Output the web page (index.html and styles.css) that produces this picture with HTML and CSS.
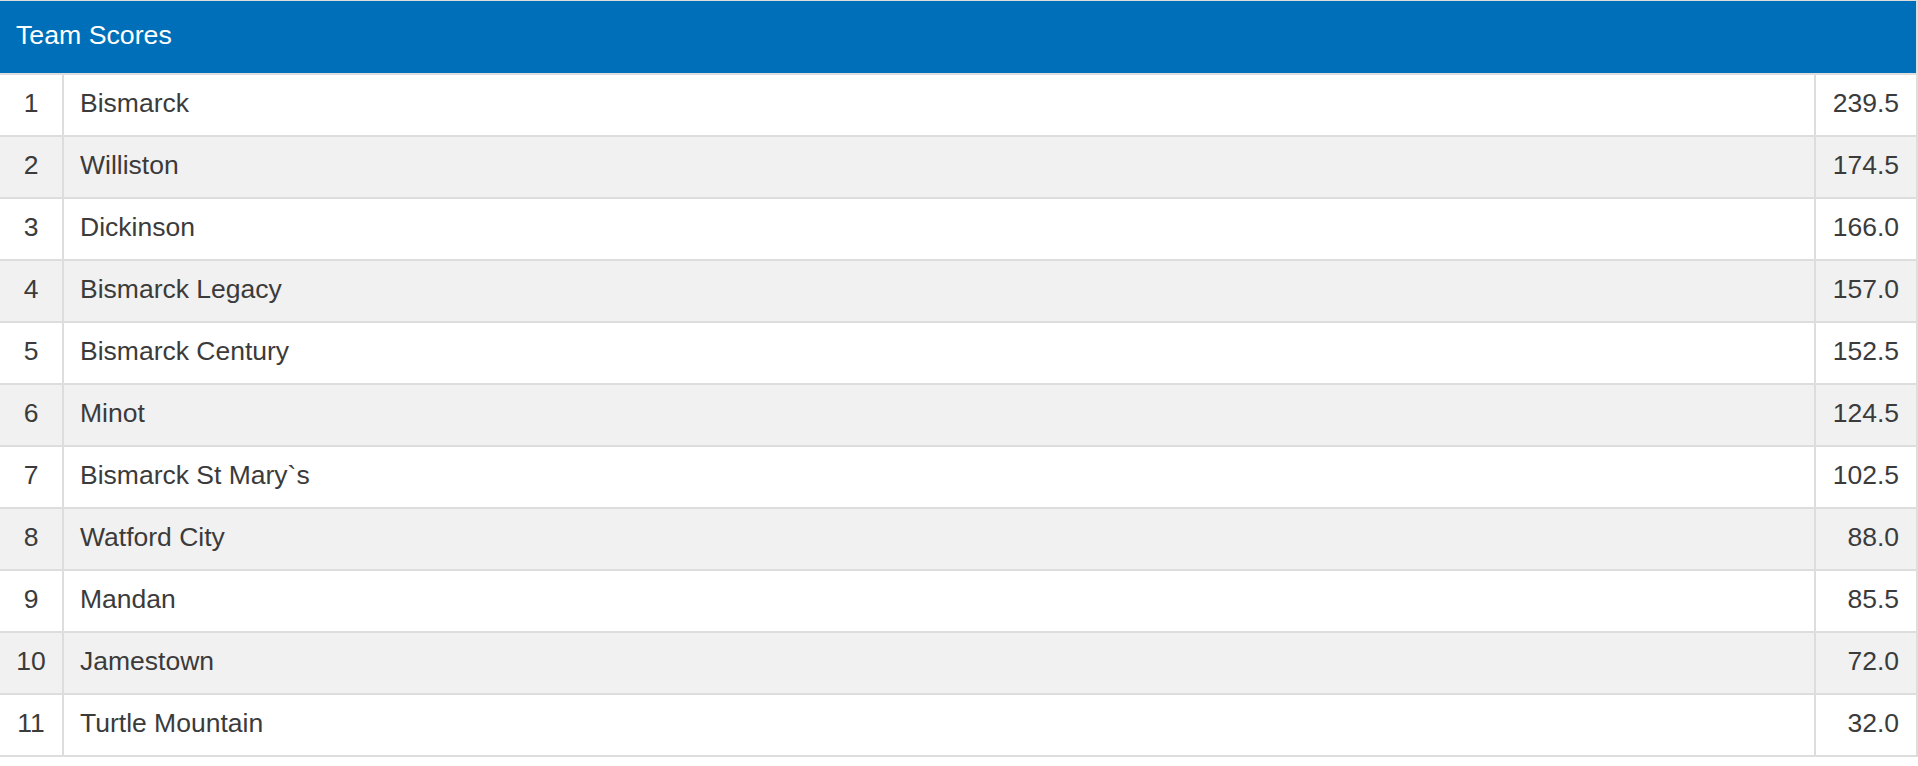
FILE: index.html
```html
<!DOCTYPE html>
<html>
<head>
<meta charset="utf-8">
<link rel="stylesheet" href="styles.css">
</head>
<body>
<div class="panel">
  <div class="panel-heading">Team Scores</div>
  <table class="scores">
    <colgroup><col class="c-rank"><col class="c-name"><col class="c-score"></colgroup>
    <tbody>
      <tr><td class="rank">1</td><td class="name">Bismarck</td><td class="score">239.5</td></tr>
      <tr><td class="rank">2</td><td class="name">Williston</td><td class="score">174.5</td></tr>
      <tr><td class="rank">3</td><td class="name">Dickinson</td><td class="score">166.0</td></tr>
      <tr><td class="rank">4</td><td class="name">Bismarck Legacy</td><td class="score">157.0</td></tr>
      <tr><td class="rank">5</td><td class="name">Bismarck Century</td><td class="score">152.5</td></tr>
      <tr><td class="rank">6</td><td class="name">Minot</td><td class="score">124.5</td></tr>
      <tr><td class="rank">7</td><td class="name">Bismarck St Mary`s</td><td class="score">102.5</td></tr>
      <tr><td class="rank">8</td><td class="name">Watford City</td><td class="score">88.0</td></tr>
      <tr><td class="rank">9</td><td class="name">Mandan</td><td class="score">85.5</td></tr>
      <tr><td class="rank">10</td><td class="name">Jamestown</td><td class="score">72.0</td></tr>
      <tr><td class="rank">11</td><td class="name">Turtle Mountain</td><td class="score">32.0</td></tr>
    </tbody>
  </table>
</div>
</body>
</html>
```

FILE: styles.css
```css
html, body {
  margin: 0;
  padding: 0;
  background: #ffffff;
}
body {
  font-family: "Liberation Sans", Arial, Helvetica, sans-serif;
  color: #3b3b3b;
}
.panel {
  width: 1918px;
  box-sizing: border-box;
  border-top: 1px solid #dddddd;
  border-right: 2px solid #dddddd;
}
.panel-heading {
  background: #006fb9;
  color: #ffffff;
  font-size: 26.7px;
  height: 72px;
  line-height: 68px;
  padding: 0 16px;
  box-sizing: border-box;
}
.scores {
  width: 100%;
  border-collapse: collapse;
  table-layout: fixed;
}
.c-rank { width: 63px; }
.c-score { width: 101px; }
.scores td {
  border-top: 2px solid #dddddd;
  border-bottom: 2px solid #dddddd;
  font-size: 26.5px;
  line-height: 30px;
  padding: 13px 16px 17px;
  white-space: nowrap;
}
.scores td + td {
  border-left: 2px solid #dddddd;
}
.scores tr:nth-child(even) td {
  background: #f1f1f1;
}
.scores td.rank {
  text-align: center;
  padding-left: 0;
  padding-right: 0;
}
.scores td.score {
  text-align: right;
  padding-left: 0;
  padding-right: 17px;
}
```
